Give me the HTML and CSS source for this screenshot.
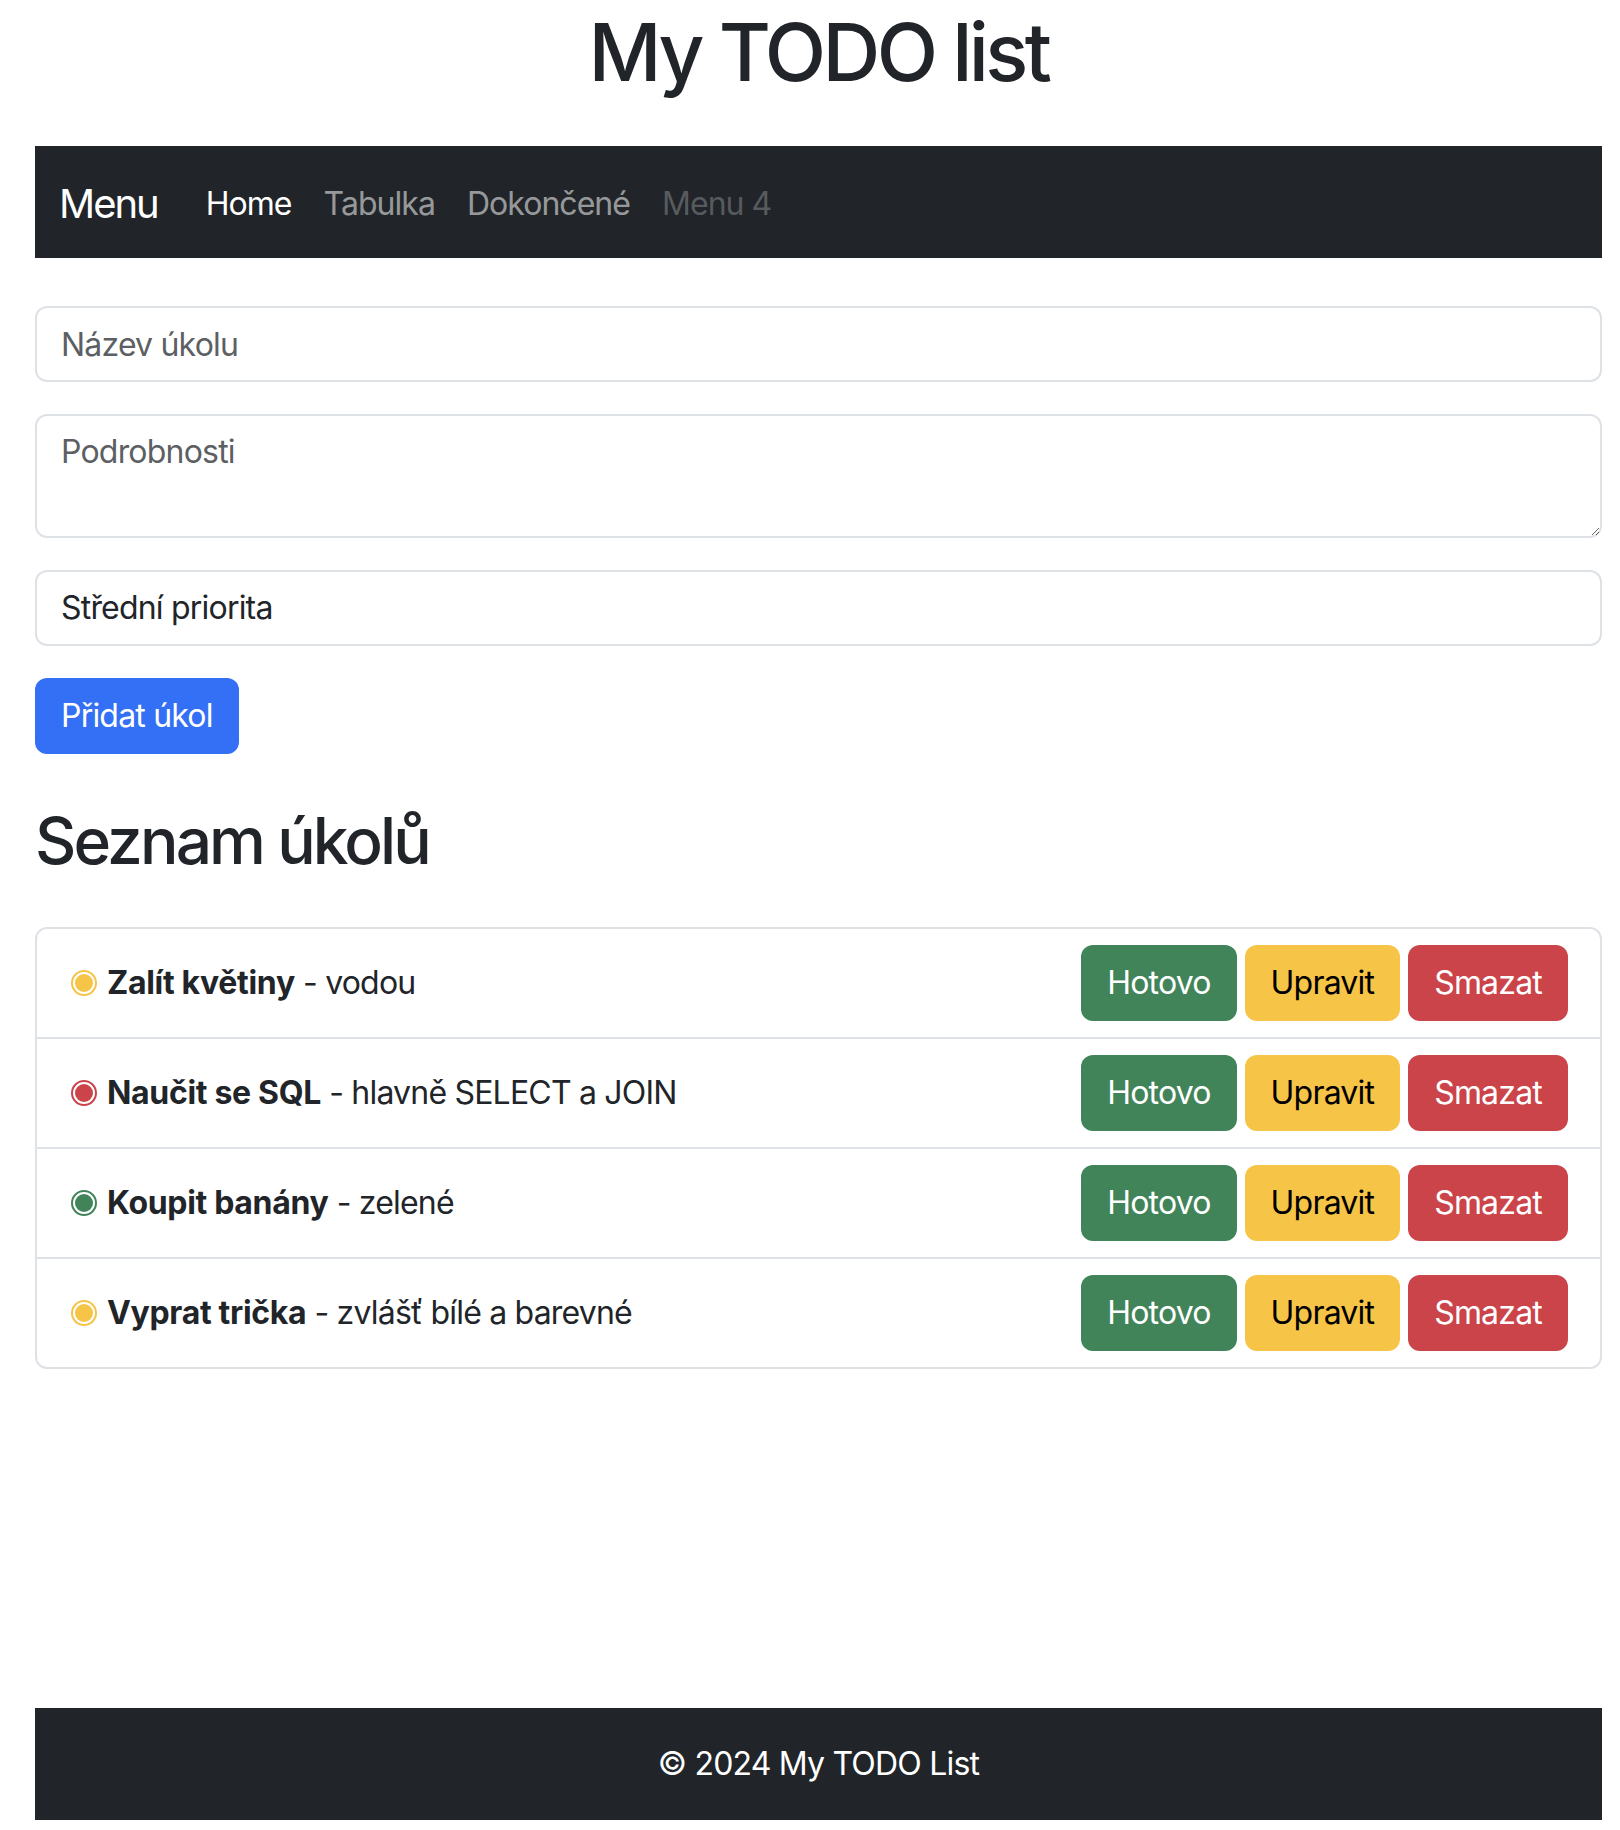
FILE: index.html
```html
<!DOCTYPE html>
<html lang="cs">
<head>
<meta charset="utf-8">
<title>My TODO list</title>
<link rel="stylesheet" href="styles.css">
</head>
<body>
<div class="page">
  <h1 class="title">My TODO list</h1>

  <nav class="navbar">
    <span class="brand">Menu</span>
    <ul class="nav">
      <li><a class="nav-link active">Home</a></li>
      <li><a class="nav-link">Tabulka</a></li>
      <li><a class="nav-link">Dokončené</a></li>
      <li><a class="nav-link disabled">Menu 4</a></li>
    </ul>
  </nav>

  <form class="task-form">
    <input class="field" type="text" placeholder="Název úkolu">
    <textarea class="field field-area" rows="2" placeholder="Podrobnosti"></textarea>
    <select class="field field-select">
      <option>Střední priorita</option>
    </select>
    <button type="button" class="btn btn-primary">Přidat úkol</button>
  </form>

  <h2 class="section-title">Seznam úkolů</h2>

  <ul class="list">
    <li class="item">
      <span class="task">
        <svg class="dot" viewBox="0 0 26 26"><circle cx="13" cy="13" r="12" fill="none" stroke="#f6c446" stroke-width="2"/><circle cx="13" cy="13" r="9" fill="#f6c446"/></svg>
        <span class="task-text"><strong>Zalít květiny</strong> - vodou</span>
      </span>
      <span class="actions">
        <button class="btn btn-success" type="button">Hotovo</button>
        <button class="btn btn-warning" type="button">Upravit</button>
        <button class="btn btn-danger" type="button">Smazat</button>
      </span>
    </li>
    <li class="item">
      <span class="task">
        <svg class="dot" viewBox="0 0 26 26"><circle cx="13" cy="13" r="12" fill="none" stroke="#cb444a" stroke-width="2"/><circle cx="13" cy="13" r="9" fill="#cb444a"/></svg>
        <span class="task-text"><strong>Naučit se SQL</strong> - hlavně SELECT a JOIN</span>
      </span>
      <span class="actions">
        <button class="btn btn-success" type="button">Hotovo</button>
        <button class="btn btn-warning" type="button">Upravit</button>
        <button class="btn btn-danger" type="button">Smazat</button>
      </span>
    </li>
    <li class="item">
      <span class="task">
        <svg class="dot" viewBox="0 0 26 26"><circle cx="13" cy="13" r="12" fill="none" stroke="#41845a" stroke-width="2"/><circle cx="13" cy="13" r="9" fill="#41845a"/></svg>
        <span class="task-text"><strong>Koupit banány</strong> - zelené</span>
      </span>
      <span class="actions">
        <button class="btn btn-success" type="button">Hotovo</button>
        <button class="btn btn-warning" type="button">Upravit</button>
        <button class="btn btn-danger" type="button">Smazat</button>
      </span>
    </li>
    <li class="item">
      <span class="task">
        <svg class="dot" viewBox="0 0 26 26"><circle cx="13" cy="13" r="12" fill="none" stroke="#f6c446" stroke-width="2"/><circle cx="13" cy="13" r="9" fill="#f6c446"/></svg>
        <span class="task-text"><strong>Vyprat trička</strong> - zvlášť bílé a barevné</span>
      </span>
      <span class="actions">
        <button class="btn btn-success" type="button">Hotovo</button>
        <button class="btn btn-warning" type="button">Upravit</button>
        <button class="btn btn-danger" type="button">Smazat</button>
      </span>
    </li>
  </ul>

  <footer class="footer">© 2024 My TODO List</footer>
</div>
</body>
</html>
```

FILE: styles.css
```css
* { box-sizing: border-box; }

html, body {
  margin: 0;
  padding: 0;
  background: #ffffff;
}

body {
  font-family: Inter, "Noto Sans", "Liberation Sans", sans-serif;
  font-size: 32px;
  line-height: 48px;
  letter-spacing: -0.025em;
  color: #212529;
}

.page {
  min-height: 100vh;
  display: flex;
  flex-direction: column;
  padding: 0 18px 10px 35px;
}

.title {
  margin: 4px 0 0;
  font-size: 80px;
  line-height: 96px;
  font-weight: 500;
  letter-spacing: -0.045em;
  text-align: center;
}

.navbar {
  margin-top: 46px;
  height: 112px;
  background: #212529;
  display: flex;
  align-items: center;
  padding: 18px 24px 14px;
}

.brand {
  color: #ffffff;
  font-size: 40px;
  line-height: 60px;
  letter-spacing: -0.05em;
  padding: 10px 0;
  margin-right: 32px;
}

.nav {
  display: flex;
  list-style: none;
  margin: 0;
  padding: 0;
}

.nav-link {
  display: block;
  padding: 16px 16px;
  color: rgba(255, 255, 255, 0.55);
  font-size: 32px;
  line-height: 48px;
  letter-spacing: -0.03em;
}

.nav-link.active { color: #ffffff; }
.nav-link.disabled { color: rgba(255, 255, 255, 0.25); }

.task-form {
  margin-top: 48px;
  display: flex;
  flex-direction: column;
  align-items: flex-start;
}

.field {
  display: block;
  width: 100%;
  height: 76px;
  margin: 0 0 32px;
  padding: 12px 24px;
  font-family: inherit;
  font-size: 32px;
  line-height: 48px;
  letter-spacing: -0.025em;
  color: #212529;
  background: #ffffff;
  border: 2px solid #dee2e6;
  border-radius: 12px;
  outline: none;
}

.field::placeholder { color: #5c5f63; opacity: 1; }

.field-area {
  height: 124px;
  resize: vertical;
}

.field-select {
  appearance: none;
  -webkit-appearance: none;
}

.btn {
  display: inline-block;
  height: 76px;
  padding: 12px 24px;
  font-family: inherit;
  font-size: 32px;
  line-height: 48px;
  letter-spacing: -0.025em;
  border: 2px solid transparent;
  border-radius: 12px;
  cursor: pointer;
}

.btn-primary {
  background: #3470f5;
  color: #ffffff;
}

.btn-success { background: #41845a; color: #ffffff; }
.btn-warning { background: #f6c446; color: #000000; }
.btn-danger { background: #cb444a; color: #ffffff; }

.section-title {
  margin: 48px 0 48px;
  font-size: 64px;
  line-height: 77px;
  font-weight: 500;
  letter-spacing: -0.045em;
}

.list {
  list-style: none;
  margin: 0;
  padding: 0;
  border: 2px solid #dee2e6;
  border-radius: 12px;
}

.item {
  display: flex;
  align-items: center;
  justify-content: space-between;
  padding: 16px 32px;
}

.item + .item { border-top: 2px solid #dee2e6; }

.task {
  display: flex;
  align-items: center;
}

.task-text { white-space: nowrap; }

.task strong {
  font-weight: 700;
  letter-spacing: -0.01em;
}

.dot {
  width: 26px;
  height: 26px;
  margin: 0 10px 0 2px;
  flex: none;
}

.actions {
  display: flex;
  gap: 8px;
}

.footer {
  margin-top: auto;
  background: #212529;
  color: #ffffff;
  text-align: center;
  padding: 32px 0;
  font-size: 32px;
  line-height: 48px;
}
```
